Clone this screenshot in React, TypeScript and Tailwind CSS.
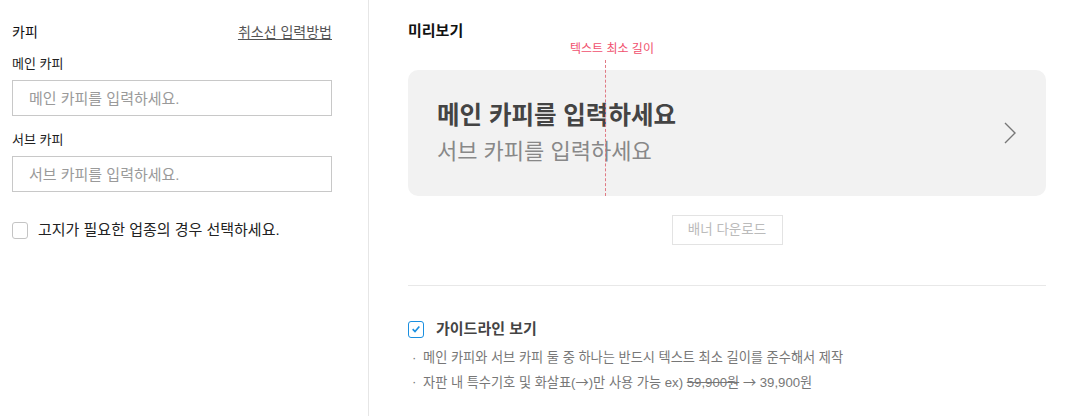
const font = {
  fontFamily: '"Liberation Sans", "Noto Sans CJK KR", sans-serif',
};

const cjk = { fontFamily: '"Noto Sans CJK KR", sans-serif' };

function CopyField({ label, placeholder }: { label: string; placeholder: string }) {
  return (
    <div>
      <p className="text-[13px] leading-[18px] text-[#222]">{label}</p>
      <input
        placeholder={placeholder}
        className="mt-[7px] h-[36px] w-full border border-[#c8c8c8] px-4 text-[15px] text-[#333] outline-none placeholder:text-[#9a9a9a]"
      />
    </div>
  );
}

export default function App() {
  return (
    <div className="flex h-[416px] w-[1065px] bg-white" style={font}>
      <aside className="w-[369px] shrink-0 border-r border-[#e6e6e6] pl-3 pr-[36px] pt-[22px]">
        <div className="flex items-center justify-between">
          <h2 className="text-[14px] leading-[20px] text-[#111]">카피</h2>
          <a className="text-[14px] leading-[20px] text-[#555] underline underline-offset-2">
            취소선 입력방법
          </a>
        </div>
        <div className="mt-[13px] space-y-[15px]">
          <CopyField label="메인 카피" placeholder="메인 카피를 입력하세요." />
          <CopyField label="서브 카피" placeholder="서브 카피를 입력하세요." />
        </div>
        <label className="mt-[28px] flex items-center gap-[10px]">
          <span className="h-[17px] w-[16px] rounded-[3px] border border-[#c4c4c4] bg-white" />
          <span className="text-[15px] leading-[20px] text-[#222]">
            고지가 필요한 업종의 경우 선택하세요.
          </span>
        </label>
      </aside>

      <main className="flex-1 pl-[39px] pr-[19px] pt-[21px]">
        <h2 className="text-[15px] font-bold leading-[20px] text-[#111]">미리보기</h2>
        <div className="relative mt-[29px]">
          <span className="absolute left-[162px] top-[-28px] text-[12px] leading-[14px] text-[#f0506e]">
            텍스트 최소 길이
          </span>
          <span className="absolute left-[197px] top-[-10px] h-[136px] border-l border-dashed border-[#e07a84]" />
          <div className="flex h-[126px] items-center justify-between rounded-[10px] bg-[#f2f2f2] pl-[29px] pr-[30px]">
            <div>
              <p className="text-[24.5px] font-bold leading-[32px] text-[#444]">
                메인 카피를 입력하세요
              </p>
              <p className="mt-[5px] text-[22px] leading-[30px] text-[#888]">
                서브 카피를 입력하세요
              </p>
            </div>
            <svg viewBox="0 0 12 22" className="h-[22px] w-[12px]">
              <path d="M1 1 L11 11 L1 21" fill="none" stroke="#777" strokeWidth="1.4" />
            </svg>
          </div>
        </div>
        <div className="mt-[19px] flex justify-center">
          <button className="h-[30px] w-[111px] border border-[#e3e3e3] text-[13.5px] text-[#bbb]">
            배너 다운로드
          </button>
        </div>
        <div className="mt-[40px] border-t border-[#e8e8e8]" />
        <label className="mt-[33px] flex items-center gap-[12px]">
          <span className="flex h-[17px] w-[16px] items-center justify-center rounded-[3px] border border-[#1a8fe0] bg-white">
            <svg viewBox="0 0 12 12" className="h-[10px] w-[10px]">
              <path d="M2 6.2 L4.8 9 L10 3" fill="none" stroke="#1a8fe0" strokeWidth="2" />
            </svg>
          </span>
          <span className="text-[15px] font-bold leading-[20px] text-[#444]">가이드라인 보기</span>
        </label>
        <ul className="mt-[9px] space-y-[4px] text-[13.2px] leading-[20px] text-[#777]">
          <li className="flex">
            <span className="w-[15px] pl-[4px]">·</span>
            메인 카피와 서브 카피 둘 중 하나는 반드시 텍스트 최소 길이를 준수해서 제작
          </li>
          <li className="flex">
            <span className="w-[15px] pl-[4px]">·</span>
            <span>
              자판 내 특수기호 및 화살표(<span style={cjk}>→</span>)만 사용 가능 ex){" "}
              <s>59,900원</s> <span style={cjk}>→</span> 39,900원
            </span>
          </li>
        </ul>
      </main>
    </div>
  );
}
